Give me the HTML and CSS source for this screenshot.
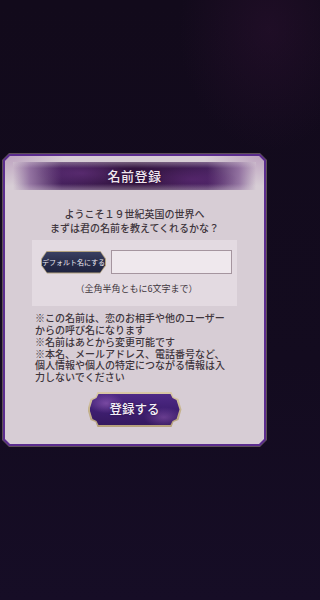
FILE: index.html
```html
<!DOCTYPE html>
<html lang="ja">
<head>
<meta charset="utf-8">
<title>名前登録</title>
<link rel="stylesheet" href="styles.css">
</head>
<body>
<div class="screen">
  <div class="frame">
    <div class="frame-line">
      <div class="panel">
        <div class="title-band"><h1 class="title">名前登録</h1></div>
        <p class="intro">ようこそ１９世紀英国の世界へ
まずは君の名前を教えてくれるかな？</p>
        <div class="name-box">
          <div class="name-row">
            <button class="default-btn" type="button"><span class="default-btn-face">デフォルト名にする</span></button>
            <input class="name-input" type="text" aria-label="名前">
          </div>
          <p class="hint">（全角半角ともに6文字まで）</p>
        </div>
        <p class="notes">※この名前は、恋のお相手や他のユーザーからの呼び名になります
※名前はあとから変更可能です
※本名、メールアドレス、電話番号など、個人情報や個人の特定につながる情報は入力しないでください</p>
        <div class="actions">
          <button class="submit-btn" type="button"><span class="submit-btn-face">登録する</span></button>
        </div>
      </div>
    </div>
  </div>
</div>
</body>
</html>
```

FILE: styles.css
```css
* { box-sizing: border-box; }
html, body { margin: 0; padding: 0; }
html {
  background:
    radial-gradient(ellipse 90px 120px at 269px 30px, rgba(55, 20, 58, 0.35), rgba(55, 20, 58, 0) 100%),
    linear-gradient(180deg, #120a1b 0%, #130b1f 60%, #160d26 100%);
}
body {
  width: 269px;
  height: 600px;
  overflow: hidden;
  font-family: "Noto Sans CJK JP", "Noto Sans", sans-serif;
}
.screen {
  height: 600px;
  display: flex;
  align-items: center;
  justify-content: center;
}
.frame {
  width: 265px;
  padding: 1px;
  background: #5e5058;
  clip-path: polygon(7px 0, calc(100% - 7px) 0, 100% 7px, 100% calc(100% - 7px), calc(100% - 7px) 100%, 7px 100%, 0 calc(100% - 7px), 0 7px);
}
.frame-line {
  padding: 2px;
  background: #5b2c8e;
  clip-path: polygon(6px 0, calc(100% - 6px) 0, 100% 6px, 100% calc(100% - 6px), calc(100% - 6px) 100%, 6px 100%, 0 calc(100% - 6px), 0 6px);
}
.panel {
  background:
    radial-gradient(ellipse 60px 30px at 0 0, rgba(150, 100, 160, 0.4), rgba(150, 100, 160, 0) 100%),
    radial-gradient(ellipse 60px 30px at 100% 0, rgba(150, 100, 160, 0.4), rgba(150, 100, 160, 0) 100%),
    #d7cdd5;
  padding: 6px 0 17px;
  clip-path: polygon(5px 0, calc(100% - 5px) 0, 100% 5px, 100% calc(100% - 5px), calc(100% - 5px) 100%, 5px 100%, 0 calc(100% - 5px), 0 5px);
}
.title-band {
  margin: 0 8px;
  height: 28px;
  display: flex;
  align-items: center;
  justify-content: center;
  background:
    linear-gradient(180deg, rgba(215, 205, 213, 0.4) 0%, rgba(215, 205, 213, 0) 22%, rgba(215, 205, 213, 0) 78%, rgba(215, 205, 213, 0.4) 100%),
    radial-gradient(ellipse 45px 12px at 28% 40%, rgba(110, 55, 135, 0.5), rgba(110, 55, 135, 0) 100%),
    radial-gradient(ellipse 45px 12px at 74% 62%, rgba(100, 45, 125, 0.5), rgba(100, 45, 125, 0) 100%),
    linear-gradient(90deg, rgba(140, 100, 150, 0) 0%, rgba(120, 80, 140, 0.7) 7%, #45205c 20%, #33143f 50%, #45205c 80%, rgba(120, 80, 140, 0.7) 93%, rgba(140, 100, 150, 0) 100%);
}
.title {
  margin: 0;
  font-size: 13px;
  font-weight: 500;
  line-height: 16px;
  letter-spacing: 0.5px;
  color: #efe6ee;
  text-shadow: 0 0 2px rgba(40, 10, 50, 0.8);
}
.intro {
  margin: 17px 0 5px;
  text-align: center;
  white-space: pre-line;
  font-size: 10px;
  line-height: 14px;
  font-weight: 500;
  color: #3f363d;
}
.name-box {
  margin: 0 27px;
  background: #e3dae1;
  padding: 10px 5px 10px 9px;
}
.name-row {
  display: flex;
  align-items: center;
  gap: 5px;
  height: 24px;
}
.default-btn {
  width: 80px;
  height: 23px;
  margin: 0;
  padding: 1px;
  border: 0;
  background: #b3a27f;
  clip-path: polygon(6px 0, calc(100% - 6px) 0, 100% 35%, 100% 65%, calc(100% - 6px) 100%, 6px 100%, 0 65%, 0 35%);
  display: flex;
}
.default-btn-face {
  flex: 1;
  display: flex;
  align-items: center;
  justify-content: center;
  background: linear-gradient(180deg, #3a4062 0%, #272b48 55%, #1f2340 100%);
  clip-path: polygon(5px 0, calc(100% - 5px) 0, 100% 35%, 100% 65%, calc(100% - 5px) 100%, 5px 100%, 0 65%, 0 35%);
  color: #eceaf3;
  font-family: "Noto Sans CJK JP", sans-serif;
  font-size: 7px;
  line-height: 9px;
  white-space: nowrap;
}
.name-input {
  flex: 1;
  height: 24px;
  margin: 0;
  padding: 0 4px;
  border: 1px solid #a5959f;
  background: #efe8ed;
  font-family: "Noto Sans CJK JP", sans-serif;
  font-size: 10px;
  outline: none;
}
.hint {
  margin: 8px 0 0;
  text-align: center;
  font-size: 9px;
  line-height: 14px;
  color: #3f363d;
}
.notes {
  margin: 6px 0 0 30px;
  width: 196px;
  white-space: pre-line;
  font-size: 10px;
  line-height: 11.8px;
  font-weight: 500;
  color: #3f363d;
}
.actions {
  margin-top: 9px;
  display: flex;
  justify-content: center;
}
.submit-btn {
  width: 94px;
  height: 35px;
  margin: 0;
  padding: 2px;
  border: 0;
  background: linear-gradient(180deg, #d8c8a6, #b5a07a);
  clip-path: polygon(10px 0, calc(100% - 10px) 0, calc(100% - 8px) 5px, calc(100% - 3px) 7px, 100% 50%, calc(100% - 3px) calc(100% - 7px), calc(100% - 8px) calc(100% - 5px), calc(100% - 10px) 100%, 10px 100%, 8px calc(100% - 5px), 3px calc(100% - 7px), 0 50%, 3px 7px, 8px 5px);
  display: flex;
}
.submit-btn-face {
  flex: 1;
  display: flex;
  align-items: center;
  justify-content: center;
  background:
    radial-gradient(ellipse 18px 10px at 18% 30%, rgba(170, 110, 200, 0.5), rgba(170, 110, 200, 0) 100%),
    radial-gradient(ellipse 20px 10px at 82% 75%, rgba(160, 100, 190, 0.45), rgba(160, 100, 190, 0) 100%),
    linear-gradient(180deg, #4f2a86 0%, #3f1f72 50%, #35195f 100%);
  clip-path: polygon(9px 0, calc(100% - 9px) 0, calc(100% - 7px) 4px, calc(100% - 3px) 6px, 100% 50%, calc(100% - 3px) calc(100% - 6px), calc(100% - 7px) calc(100% - 4px), calc(100% - 9px) 100%, 9px 100%, 7px calc(100% - 4px), 3px calc(100% - 6px), 0 50%, 3px 6px, 7px 4px);
  color: #f4eef7;
  font-family: "Noto Sans CJK JP", sans-serif;
  font-size: 12.5px;
  font-weight: 500;
  line-height: 16px;
  text-shadow: 0 0 2px rgba(30, 10, 50, 0.8);
}
```
